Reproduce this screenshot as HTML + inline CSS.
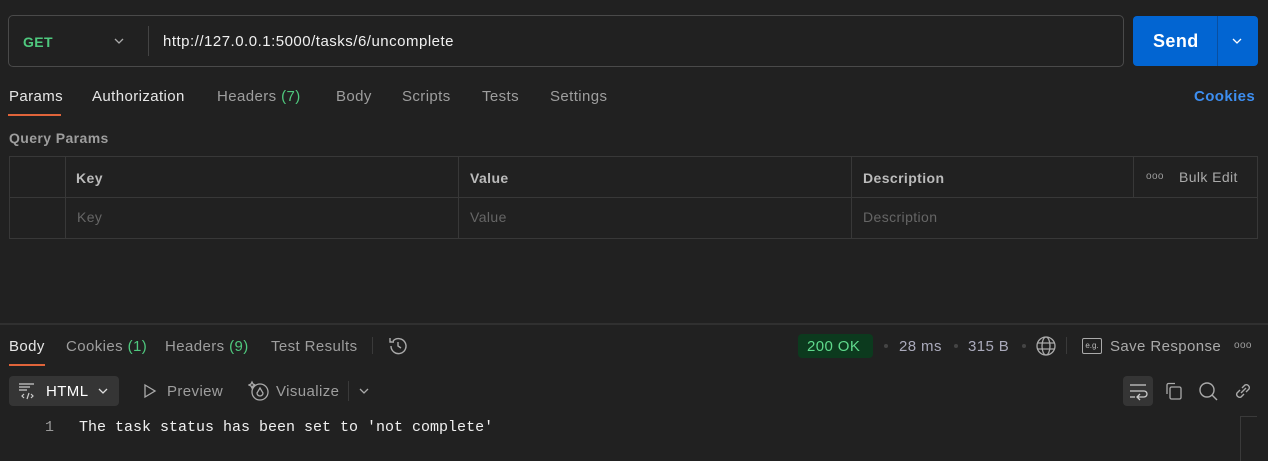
<!DOCTYPE html><html><head><style>
*{box-sizing:border-box;margin:0;padding:0}
body{width:1268px;height:461px;background:#212121;font-family:"Liberation Sans",sans-serif;color:#e6e6e6;position:relative;overflow:hidden;font-size:15px;letter-spacing:0.4px}
.a{position:absolute;white-space:nowrap}
.g{color:#9e9e9e}.gr{color:#4fc97e}
</style></head><body>
<div class="a" style="left:8px;top:15px;width:1116px;height:52px;border:1px solid #4a4a4a;border-radius:5px"></div>
<div class="a gr" style="left:23px;top:34px;font-weight:bold;font-size:14px">GET</div>
<svg class="a" style="left:113px;top:36px" width="12" height="10"><path d="M2 3l4 4 4-4" stroke="#aaa" fill="none" stroke-width="1.3"/></svg>
<div class="a" style="left:148px;top:26px;width:1px;height:30px;background:#444"></div>
<div class="a" style="left:163px;top:33px;font-size:15px;color:#f0f0f0;letter-spacing:0.5px">http://127.0.0.1:5000/tasks/6/uncomplete</div>
<div class="a" style="left:1133px;top:16px;width:125px;height:50px;background:#0265d2;border-radius:4px"></div>
<div class="a" style="left:1217px;top:16px;width:1px;height:50px;background:#0a4fa0"></div>
<div class="a" style="left:1153px;top:31px;font-weight:bold;font-size:18px;color:#fff">Send</div>
<svg class="a" style="left:1231px;top:36px" width="12" height="10"><path d="M2 3l4 4 4-4" stroke="#fff" fill="none" stroke-width="1.3"/></svg>

<div class="a" style="left:9px;top:88px">Params</div>
<div class="a" style="left:8px;top:114px;width:53px;height:2px;background:#e0643a"></div>
<div class="a" style="left:92px;top:88px">Authorization</div>
<div class="a g" style="left:217px;top:88px">Headers <span class="gr">(7)</span></div>
<div class="a g" style="left:336px;top:88px">Body</div>
<div class="a g" style="left:402px;top:88px">Scripts</div>
<div class="a g" style="left:482px;top:88px">Tests</div>
<div class="a g" style="left:550px;top:88px">Settings</div>
<div class="a" style="left:1194px;top:88px;color:#3d8ef0;font-weight:bold">Cookies</div>
<div class="a g" style="left:9px;top:130px;font-weight:bold;font-size:14px">Query Params</div>

<div class="a" style="left:9px;top:156px;width:1249px;height:83px;border:1px solid #383838"></div>
<div class="a" style="left:9px;top:197px;width:1249px;height:1px;background:#383838"></div>
<div class="a" style="left:65px;top:156px;width:1px;height:83px;background:#383838"></div>
<div class="a" style="left:458px;top:156px;width:1px;height:83px;background:#383838"></div>
<div class="a" style="left:851px;top:156px;width:1px;height:83px;background:#383838"></div>
<div class="a" style="left:1133px;top:156px;width:1px;height:41px;background:#383838"></div>
<div class="a g" style="left:76px;top:170px;font-weight:bold;font-size:14px;color:#bbb">Key</div>
<div class="a g" style="left:470px;top:170px;font-weight:bold;font-size:14px;color:#bbb">Value</div>
<div class="a g" style="left:863px;top:170px;font-weight:bold;font-size:14px;color:#bbb">Description</div>
<div class="a g" style="left:1146px;top:171px;font-size:10px">ooo</div>
<div class="a g" style="left:1179px;top:169px;font-size:14px;color:#aaa">Bulk Edit</div>
<div class="a" style="left:77px;top:209px;font-size:14px;color:#666">Key</div>
<div class="a" style="left:470px;top:209px;font-size:14px;color:#666">Value</div>
<div class="a" style="left:863px;top:209px;font-size:14px;color:#666">Description</div>

<div class="a" style="left:0;top:323px;width:1268px;height:2px;background:#303030"></div>
<div class="a" style="left:9px;top:338px">Body</div>
<div class="a" style="left:9px;top:364px;width:36px;height:2px;background:#e0643a"></div>
<div class="a g" style="left:66px;top:338px">Cookies <span class="gr">(1)</span></div>
<div class="a g" style="left:165px;top:338px">Headers <span class="gr">(9)</span></div>
<div class="a g" style="left:271px;top:338px">Test Results</div>
<div class="a" style="left:372px;top:337px;width:1px;height:17px;background:#3a3a3a"></div>
<svg class="a" style="left:387px;top:335px" width="22" height="22" fill="none" stroke="#aaa" stroke-width="1.4"><path d="M4 11a7.5 7.5 0 1 0 2-5M3 3v4h4M11 7v4l3 2"/></svg>

<div class="a" style="left:798px;top:334px;width:75px;height:24px;background:#0c3a1e;border-radius:4px"></div>
<div class="a" style="left:807px;top:338px;color:#5fd98c">200 OK</div>
<div class="a" style="left:884px;top:344px;width:4px;height:4px;border-radius:2px;background:#444"></div>
<div class="a g" style="left:899px;top:338px;color:#aab">28 ms</div>
<div class="a" style="left:954px;top:344px;width:4px;height:4px;border-radius:2px;background:#444"></div>
<div class="a g" style="left:968px;top:338px;color:#aab">315 B</div>
<div class="a" style="left:1022px;top:344px;width:4px;height:4px;border-radius:2px;background:#444"></div>
<svg class="a" style="left:1035px;top:335px" width="22" height="22" fill="none" stroke="#aaa" stroke-width="1.3"><circle cx="11" cy="11" r="9"/><ellipse cx="11" cy="11" rx="4" ry="9"/><path d="M2 8h18M2 14h18"/></svg>
<div class="a" style="left:1066px;top:337px;width:1px;height:17px;background:#3a3a3a"></div>
<div class="a" style="left:1082px;top:338px;width:20px;height:16px;border:1px solid #aaa;border-radius:2px;font-size:8px;color:#bbb;text-align:center;line-height:14px;letter-spacing:0">e.g.</div>
<div class="a g" style="left:1110px;top:338px;color:#aaa">Save Response</div>
<div class="a g" style="left:1234px;top:340px;font-size:10px">ooo</div>

<div class="a" style="left:9px;top:376px;width:110px;height:30px;background:#353535;border-radius:4px"></div>
<svg class="a" style="left:18px;top:382px" width="20" height="18" fill="none" stroke="#ccc" stroke-width="1.2"><path d="M1 2h15M1 5h11M1 8h8M6 12l-2 2 2 2M13 12l2 2-2 2M11 11l-2 6"/></svg>
<div class="a" style="left:46px;top:383px;color:#fff">HTML</div>
<svg class="a" style="left:97px;top:386px" width="12" height="10"><path d="M2 3l4 4 4-4" stroke="#ddd" fill="none" stroke-width="1.3"/></svg>
<svg class="a" style="left:142px;top:383px" width="16" height="16" fill="none" stroke="#aaa" stroke-width="1.3"><path d="M3 2l10 6-10 6z"/></svg>
<div class="a g" style="left:167px;top:383px">Preview</div>
<svg class="a" style="left:248px;top:380px" width="22" height="22" fill="none" stroke="#aaa" stroke-width="1.3"><circle cx="12" cy="12" r="8"/><path d="M12 8l-3 5a3 3 0 0 0 6 0z M4 2l1 2 2 1-2 1-1 2-1-2-2-1 2-1z"/></svg>
<div class="a g" style="left:276px;top:383px">Visualize</div>
<div class="a" style="left:348px;top:381px;width:1px;height:20px;background:#3a3a3a"></div>
<svg class="a" style="left:358px;top:386px" width="12" height="10"><path d="M2 3l4 4 4-4" stroke="#aaa" fill="none" stroke-width="1.3"/></svg>

<div class="a" style="left:1123px;top:376px;width:30px;height:30px;background:#353535;border-radius:4px"></div>
<svg class="a" style="left:1128px;top:381px" width="20" height="20" fill="none" stroke="#ccc" stroke-width="1.3"><path d="M2 4h16M2 10h14a3 3 0 0 1 0 6h-6M12 13l-3 3 3 3M2 16h5"/></svg>
<svg class="a" style="left:1163px;top:381px" width="20" height="20" fill="none" stroke="#aaa" stroke-width="1.3"><path d="M4 13V4a1.5 1.5 0 0 1 1.5-1.5H12"/><rect x="7" y="6" width="11" height="12" rx="1.5"/></svg>
<svg class="a" style="left:1197px;top:380px" width="22" height="22" fill="none" stroke="#aaa" stroke-width="1.4"><circle cx="10" cy="10" r="7"/><path d="M15 15l5 5"/></svg>
<svg class="a" style="left:1232px;top:380px" width="22" height="22" fill="none" stroke="#aaa" stroke-width="1.4"><path d="M9 13l5-5M8 10l-3 3a3 3 0 0 0 4 4l3-3M14 12l3-3a3 3 0 0 0-4-4l-3 3"/></svg>

<div class="a" style="left:45px;top:419px;font-family:'Liberation Mono',monospace;font-size:15px;color:#999;letter-spacing:0">1</div>
<div class="a" style="left:79px;top:419px;font-family:'Liberation Mono',monospace;font-size:15px;color:#f0f0f0;letter-spacing:0">The task status has been set to 'not complete'</div>
<div class="a" style="left:1240px;top:416px;width:1px;height:45px;background:#3a3a3a"></div>
<div class="a" style="left:1240px;top:416px;width:17px;height:1px;background:#3a3a3a"></div>
</body></html>
